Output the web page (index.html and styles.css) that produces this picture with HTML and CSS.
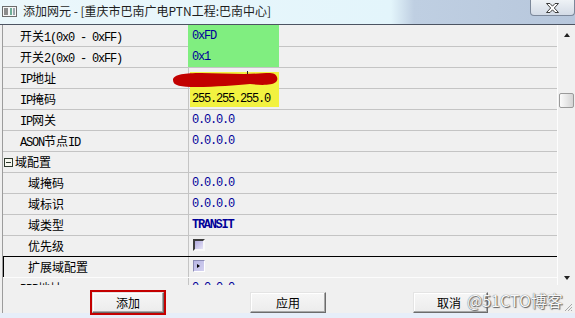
FILE: index.html
```html
<!DOCTYPE html>
<html>
	<head>
		<meta charset="utf-8">
		<title>添加网元</title>
		<link rel="stylesheet" href="styles.css">
	</head>
	<body>
		<div class="titlebar">
			<svg class="app_icon" width="15" height="11" viewBox="0 0 15 11">
				<rect x="0.5" y="0.5" width="14" height="10" fill="#f6f6f6" stroke="#6c6c6c"/>
				<rect x="2" y="2" width="4" height="7" fill="#8c8c8c"/>
				<rect x="8" y="2" width="2" height="7" fill="#6fae98"/>
				<rect x="11" y="2" width="2" height="7" fill="#9aa6ae"/>
			</svg>
			<span class="title">添加网元 - [重庆市巴南广电PTN工程:巴南中心]</span>
			<div class="close">
				<svg width="13" height="10" viewBox="0 0 13 10">
					<polygon points="0.5,0.5 4,0.5 6.5,3.2 9,0.5 12.5,0.5 8.3,5 12.5,9.5 9,9.5 6.5,6.8 4,9.5 0.5,9.5 4.7,5" fill="#ffffff" stroke="#3c3c3c" stroke-width="1"/>
				</svg>
			</div>
		</div>

		<div class="main">
			<div class="grid">
				<div class="mark mark_green"></div>
				<div class="mark mark_yellow"></div>
				<svg class="scribble" width="554" height="260">
					<g transform="translate(-3,-25)">
						<path d="M173 80 C173 74 186 73 201 73 L244 74 C254 74 262 73 270 73 C277 73 279 79 276 82 C271 86 258 85 250 84 C236 85 216 87 196 87 C181 87 173 86 173 80 Z" fill="#c20000"/>
						<rect x="247" y="71" width="1" height="3" fill="#222"/>
					</g>
				</svg>

				<div class="row">
					<div class="k">开关<span class="en">1(0x0 - 0xFF)</span></div>
					<div class="v">0xFD</div>
				</div>
				<div class="row">
					<div class="k">开关<span class="en">2(0x0 - 0xFF)</span></div>
					<div class="v">0x1</div>
				</div>
				<div class="row">
					<div class="k"><span class="en">IP</span>地址</div>
					<div class="v"></div>
				</div>
				<div class="row">
					<div class="k"><span class="en">IP</span>掩码</div>
					<div class="v black">255.255.255.0</div>
				</div>
				<div class="row">
					<div class="k"><span class="en">IP</span>网关</div>
					<div class="v">0.0.0.0</div>
				</div>
				<div class="row">
					<div class="k"><span class="en">ASON</span>节点<span class="en">ID</span></div>
					<div class="v">0.0.0.0</div>
				</div>
				<div class="row">
					<div class="k group"><span class="expander"></span>域配置</div>
					<div class="v"></div>
				</div>
				<div class="row">
					<div class="k sub">域掩码</div>
					<div class="v">0.0.0.0</div>
				</div>
				<div class="row">
					<div class="k sub">域标识</div>
					<div class="v">0.0.0.0</div>
				</div>
				<div class="row">
					<div class="k sub">域类型</div>
					<div class="v bold">TRANSIT</div>
				</div>
				<div class="row">
					<div class="k sub">优先级</div>
					<div class="v"><span class="chk"></span></div>
				</div>
				<div class="row sel">
					<div class="k sub">扩展域配置</div>
					<div class="v"><span class="more"></span></div>
				</div>
				<div class="row">
					<div class="k"><span class="en">PPP</span>地址</div>
					<div class="v">0.0.0.0</div>
				</div>
			</div>

			<div class="vscroll">
				<span class="arrow_up"></span>
				<span class="thumb"></span>
				<span class="arrow_down"></span>
			</div>
		</div>

		<div class="footer">
			<div class="focus_frame">
				<button class="boton">添加</button>
			</div>
			<button class="boton boton_apply">应用</button>
			<button class="boton boton_cancel">取消</button>
			<span class="watermark">@51CTO博客</span>
			<svg class="grip" width="10" height="10" viewBox="0 0 10 10">
				<path d="M9 2 L2 9 M9 5 L5 9 M9 8 L8 9" stroke="#a8a8a8" stroke-width="1"/>
			</svg>
		</div>
		<div class="strip"></div>
	</body>
</html>
```

FILE: styles.css
```css
*
{
	box-sizing: border-box;
}

body
{
	margin: 0;
	width: 575px;
	height: 318px;
	overflow: hidden;
	background-color: #f0f0f0;
	font-family: "Noto Sans CJK SC", sans-serif;
	font-size: 12px;
	color: #000;
}

.titlebar
{
	height: 25px;
	border-bottom: 1px solid #4c5462;
	background: linear-gradient(to right, #ebf7fb 0%, #e3f5fb 68%, #bfcfe2 72%, #b7c7dc 100%);
	display: flex;
	align-items: flex-start;
	padding-left: 2px;
}

.app_icon
{
	margin-top: 6px;
}

.title
{
	margin-left: 6px;
	margin-top: 1px;
	line-height: 20px;
	color: #1e1e1e;
}

.close
{
	margin-left: auto;
	width: 45px;
	height: 16px;
	border: 1px solid #7c889a;
	border-top: 0;
	border-radius: 0 0 4px 4px;
	background: linear-gradient(#eef2f6, #d3dbe6);
	display: flex;
	align-items: center;
	justify-content: center;
}

.main
{
	display: flex;
	height: 260px;
}

.grid
{
	flex: 1;
	margin-left: 2px;
	border-left: 1px solid #9c9c9c;
	padding-top: 1px;
	background-color: #f0f0f0;
	position: relative;
	overflow: hidden;
}

.mark
{
	position: absolute;
	z-index: 1;
}

.mark_green
{
	left: 185px;
	top: 0;
	width: 91px;
	height: 42px;
	background-color: #80ee80;
}

.mark_yellow
{
	left: 187px;
	top: 47px;
	width: 89px;
	height: 35px;
	background-color: #f2f240;
}

.scribble
{
	position: absolute;
	left: 0;
	top: 0;
	z-index: 3;
}

.row
{
	display: grid;
	grid-template-columns: 186px 1fr;
	height: 21px;
	border-bottom: 1px solid #c4c4c4;
}

.row.sel
{
	margin-top: -1px;
	height: 22px;
	border-top: 1px solid #000;
	border-bottom-color: #fcfcfc;
}

.k
{
	border-right: 1px solid #c4c4c4;
	padding-left: 17px;
	line-height: 20px;
	white-space: nowrap;
}

.k.sub
{
	padding-left: 25px;
}

.sel .k
{
	border-left: 1px solid #000;
	padding-left: 24px;
}

.k.group
{
	padding-left: 1px;
	display: flex;
	align-items: center;
}

.en
{
	font-family: "Liberation Mono", monospace;
	font-size: 12px;
	letter-spacing: -1.2px;
}

.expander
{
	width: 9px;
	height: 9px;
	border: 1px solid #2e3a2e;
	margin-right: 2px;
	background: linear-gradient(#2e3a2e, #2e3a2e) center / 5px 1px no-repeat, #f8f8f0;
}

.v
{
	position: relative;
	z-index: 2;
	padding-left: 3px;
	line-height: 20px;
	color: #000099;
	font-family: "Liberation Mono", monospace;
	font-size: 12px;
	letter-spacing: -1.2px;
	white-space: nowrap;
}

.v.black
{
	color: #000;
}

.v.bold
{
	font-weight: bold;
	letter-spacing: -1.3px;
}

.chk,
.more
{
	display: inline-block;
	width: 12px;
	height: 12px;
	vertical-align: middle;
	margin-top: -2px;
	margin-left: 1px;
}

.chk
{
	border: 2px solid;
	border-color: #3c3c3c #f8f8f8 #f8f8f8 #3c3c3c;
	background: linear-gradient(135deg, #b0a8dc, #e6e4f6);
}

.more
{
	border: 1px solid;
	border-color: #8c8cb4 #ffffff #ffffff #8c8cb4;
	background: linear-gradient(135deg, #b8b6e4, #d4d2f0);
	position: relative;
}

.more::after
{
	content: "";
	position: absolute;
	left: 3px;
	top: 3px;
	border-left: 3px solid #000;
	border-top: 2.5px solid transparent;
	border-bottom: 2.5px solid transparent;
}

.vscroll
{
	width: 18px;
	border-left: 1px solid #fdfdfd;
	background-color: #f0f0f0;
	display: flex;
	flex-direction: column;
	align-items: center;
	padding-top: 8px;
	padding-bottom: 5px;
}

.arrow_up
{
	border-bottom: 4px solid #222;
	border-left: 3.5px solid transparent;
	border-right: 3.5px solid transparent;
}

.arrow_down
{
	margin-top: auto;
	border-top: 4px solid #222;
	border-left: 3.5px solid transparent;
	border-right: 3.5px solid transparent;
}

.thumb
{
	margin-top: 56px;
	width: 15px;
	height: 15px;
	border: 1px solid #9a9a9a;
	border-radius: 2px;
	background: linear-gradient(to right, #fbfbfb, #e8e8e8 50%, #d4d4d4);
}

.footer
{
	height: 28px;
	margin-left: 2px;
	border-left: 1px solid #9c9c9c;
	display: flex;
	align-items: flex-start;
	padding-top: 5px;
	position: relative;
}

.focus_frame
{
	margin-left: 87px;
	width: 76px;
	height: 25px;
	border: 2px solid #c40000;
}

.boton
{
	font-family: "Noto Sans CJK SC", sans-serif;
	font-size: 12px;
	color: #000;
	height: 21px;
	padding: 0;
	line-height: 18px;
	background: linear-gradient(#f6f6f6, #ececec);
	border: 1px solid;
	border-color: #e4e4e4 #6c6c6c #6c6c6c #e4e4e4;
	box-shadow: inset -1px -1px #a8a8a8, inset 1px 1px #ffffff;
}

.focus_frame .boton
{
	width: 72px;
}

.boton_apply
{
	margin-left: 84px;
	margin-top: 2px;
	width: 76px;
}

.boton_cancel
{
	margin-left: 87px;
	margin-top: 2px;
	width: 75px;
	text-align: left;
	padding-left: 23px;
}

.watermark
{
	position: absolute;
	left: 464px;
	top: 5px;
	font-family: "Noto Sans CJK SC", sans-serif;
	font-size: 16px;
	line-height: 20px;
	color: #f8f8f8;
	text-shadow: 0 0 1px #444, 1px 1px 1px #666;
}

.grip
{
	position: absolute;
	right: 2px;
	bottom: 1px;
}

.strip
{
	height: 5px;
	background-color: #e6eef9;
}
```
